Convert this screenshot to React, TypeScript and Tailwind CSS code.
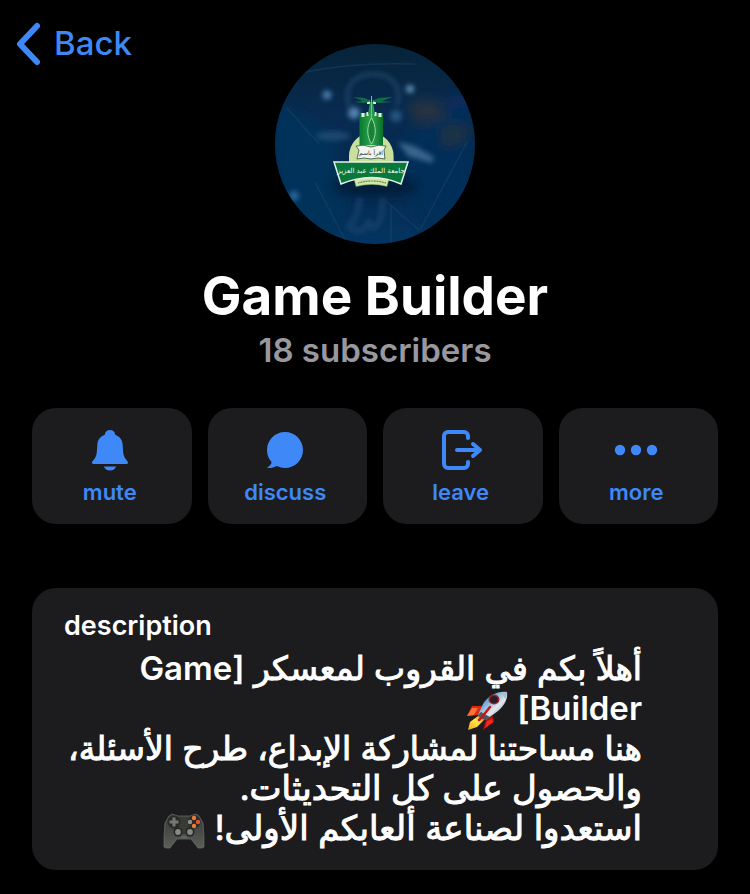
import type { ReactNode } from "react"

interface Action {
  label: string
  icon: ReactNode
}

function BellIcon() {
  return (
    <svg viewBox="0 0 44 44" className="size-11" fill="currentColor" aria-hidden="true">
      <path d="M22 2c-2.900 0-5 2-5.200 4.700C12 8.600 9.500 12 9.300 17L9 22c-.2 4.500-1 7.300-3.600 10.200-.9 1-1.400 1.700-1.400 2.300C4 35.500 4.800 36 6 36h32c1.200 0 2-.5 2-1.500 0-.6-.5-1.300-1.400-2.300C36 29.300 35.200 26.500 35 22l-.3-5c-.2-5-2.700-8.400-7.500-10.300C27 4 24.900 2 22 2Z" />
      <path d="M16 38.500h12c-.7 2.500-3 4-6 4s-5.300-1.500-6-4Z" />
    </svg>
  )
}

function ChatIcon() {
  return (
    <svg viewBox="0 0 44 44" className="size-11" fill="currentColor" aria-hidden="true">
      <path d="M22 4C12 4 4 12 4 22c0 5 1.700 8.800 4.600 12-.4 2.400-1.900 4.200-4 5.200-.5.300-.3.800.3.800 3.500.100 6.500-.6 9-2 2.500 1.300 5.200 2 8.100 2 10 0 18-8 18-18S32 4 22 4Z" />
    </svg>
  )
}

function LeaveIcon() {
  return (
    <svg
      viewBox="0 0 44 44"
      className="size-11"
      fill="none"
      stroke="currentColor"
      strokeWidth="4"
      strokeLinecap="round"
      strokeLinejoin="round"
      aria-hidden="true"
    >
      <path d="M29 10V8a4 4 0 0 0-4-4H9a4 4 0 0 0-4 4v28a4 4 0 0 0 4 4h16a4 4 0 0 0 4-4v-2" />
      <path d="M18 22h23M34 16l7 6-7 6" />
    </svg>
  )
}

function MoreIcon() {
  return (
    <svg viewBox="0 0 44 44" className="size-11" fill="currentColor" aria-hidden="true">
      <circle cx="6" cy="22" r="5.200" />
      <circle cx="22" cy="22" r="5.200" />
      <circle cx="38" cy="22" r="5.200" />
    </svg>
  )
}

const actions: Action[] = [
  { label: "mute", icon: <BellIcon /> },
  { label: "discuss", icon: <ChatIcon /> },
  { label: "leave", icon: <LeaveIcon /> },
  { label: "more", icon: <MoreIcon /> },
]

function Avatar() {
  return (
    <svg viewBox="0 0 200 200" className="size-[200px] rounded-full" role="img" aria-label="Game Builder">
      <defs>
        <linearGradient id="sky" x1="0" y1="0" x2="0" y2="1">
          <stop offset="0" stopColor="#062338" />
          <stop offset="0.35" stopColor="#082b50" />
          <stop offset="0.7" stopColor="#052a50" />
          <stop offset="1" stopColor="#033561" />
        </linearGradient>
        <linearGradient id="tower" x1="0" y1="0" x2="1" y2="0">
          <stop offset="0" stopColor="#087a30" />
          <stop offset="0.5" stopColor="#2fa64d" />
          <stop offset="1" stopColor="#07702a" />
        </linearGradient>
        <filter id="soft" x="-50%" y="-50%" width="200%" height="200%">
          <feGaussianBlur stdDeviation="2.500" />
        </filter>
        <filter id="softer" x="-50%" y="-50%" width="200%" height="200%">
          <feGaussianBlur stdDeviation="6" />
        </filter>
      </defs>
      <rect width="200" height="200" fill="url(#sky)" />

      {/* blurred background */}
      <g filter="url(#softer)">
        <path d="M0 60 60 90 70 190 0 180Z" fill="#06315a" />
        <path d="M120 100 190 60 200 150 150 190Z" fill="#052e58" />
        <ellipse cx="100" cy="142" rx="45" ry="10" fill="#031a38" />
        <path d="M132 62q16-12 32-4l8 16-30 6Z" fill="#253241" />
        <ellipse cx="182" cy="58" rx="13" ry="7" fill="#082c60" />
        <path d="m166 84 14-4 16 3-6 14-22 8Z" fill="#1c3142" />
      </g>
      <g filter="url(#soft)">
        <path d="M74 62c-6-20 6-32 24-32s30 12 24 32" fill="none" stroke="#1b4065" strokeWidth="4" />
        <circle cx="52" cy="51" r="4.500" fill="#4c7baa" />
        <circle cx="135" cy="45" r="4" fill="#5f8cb2" />
        <circle cx="79" cy="69" r="6" fill="#5182ae" />
        <circle cx="121" cy="72" r="6" fill="#27527f" />
        <circle cx="19" cy="152" r="5" fill="#29639a" />
        <ellipse cx="58" cy="92" rx="17" ry="5" fill="#1d466f" />
        <path d="m123 98 16 4 20 11-2 6-24-7Z" fill="#3a658c" />
        <path d="M85 154q-3 22-11 28 10 12 20-4 4 14 12-4l2-20" fill="none" stroke="#143f69" strokeWidth="5" />
      </g>
      <g stroke="#284b68" strokeWidth="1.500" opacity="0.4" fill="none">
        <path d="m12 64 32 36M40 138l30 58M192 98l-47 88M112 158l32 28M116 162v38M30 28q50-10 110-8" />
      </g>

      {/* university crest */}
      <path d="M74 118v-6a22.300 23 0 0 1 44.600 0v6Z" fill="#c9df9b" />
      <rect x="84.500" y="69" width="23.500" height="32" fill="url(#tower)" />
      <g fill="#dff2de">
        <path d="M86.500 69h3v4h-3zM91.500 68h2v4h-2zM99.500 68h2v4h-2zM103.500 69h3v4h-3z" />
        <rect x="92" y="56" width="3" height="4" />
        <rect x="98" y="56" width="3" height="4" />
      </g>
      <g fill="#116b45">
        <path d="m96.500 57-7-3-11-1 9 4-9 1 11 1Z" />
        <path d="m96.500 57 7-3 14-1-10 4 10 1-14 1Z" />
        <path d="M95 58h3l2 12h-7Z" fill="#2b9350" />
      </g>
      <path d="M96.500 52v23" stroke="#78bf83" strokeWidth="1" />
      <path d="M96.500 74c-5 8-5 18 0 26 5-8 5-18 0-26Z" fill="#168339" stroke="#9fd8a0" strokeWidth="1" />
      <path d="M81 102q8-2 15 1 8-3 15-1l-2 4 1 9q-7-2-14 0-7-2-14 0l2-9Z" fill="#f2f5ef" stroke="#536b57" strokeWidth="1" />
      <text x="96" y="111" textAnchor="middle" fontSize="6" fill="#273c2b" fontFamily="'DejaVu Sans', sans-serif">
        اقرأ باسم
      </text>
      <path d="M79 135q18-5 35 0l-2 7.500q-15-4-31 0Z" fill="#d2e6a6" stroke="#6d985e" strokeWidth="0.500" />
      <path d="M83 139q14-4 28 0" stroke="#537743" strokeWidth="1.200" strokeDasharray="1 0.600" fill="none" />
      <path d="M59 118h74l-7 22q-29-13-60 0Z" fill="#08783b" stroke="#e5f4e8" strokeWidth="1.500" />
      <text x="96" y="129" textAnchor="middle" fontSize="7" fill="#f2fff5" fontFamily="'DejaVu Sans', sans-serif">
        جامعة الملك عبد العزيز
      </text>
    </svg>
  )
}

function Rocket() {
  return (
    <svg viewBox="0 0 42 40" className="-my-2 inline-block h-10 w-[42px] align-middle" role="img" aria-label="rocket">
      <defs>
        <linearGradient id="hull" x1="0" y1="0" x2="1" y2="1">
          <stop offset="0" stopColor="#3e82bd" />
          <stop offset="0.350" stopColor="#79afd8" />
          <stop offset="0.600" stopColor="#e3e8ee" />
          <stop offset="1" stopColor="#677481" />
        </linearGradient>
        <linearGradient id="flame" x1="1" y1="0" x2="0" y2="1">
          <stop offset="0" stopColor="#f07a13" />
          <stop offset="0.450" stopColor="#ffe64c" />
          <stop offset="1" stopColor="#f4a914" />
        </linearGradient>
      </defs>
      <path d="m16 15-10 0-5 10 12-1Z" fill="#d92914" />
      <path d="m12 17-6 0-5 8 7-1Z" fill="#ff7038" />
      <path d="m27 25 1 6-11 8 3-11Z" fill="#b80e12" />
      <path d="m26 28 1 3-8 6 2-7Z" fill="#f02a1f" />
      <path d="m12 25-8 6-2 8 9-3 8-8Z" fill="url(#flame)" />
      <path d="M41 1C31 0 22 5 17 13l-5 11 3 3 6 1 11-8C39 14 42 7 41 1Z" fill="url(#hull)" />
      <path d="m12 24 3 4 6 1 3-3-9-5Z" fill="#55555d" />
      <path d="m24 16-8 10-3 3" stroke="#c71818" strokeWidth="2.500" strokeLinecap="round" />
      <ellipse cx="28" cy="8.500" rx="5.500" ry="5" fill="#a51d24" />
      <ellipse cx="28" cy="8.500" rx="3.900" ry="3.500" fill="#24202a" />
      <path d="M35 2q4-1 6-1 0 4-2 7-1-4-4-6Z" fill="#a9bdca" />
    </svg>
  )
}

function Gamepad() {
  return (
    <svg viewBox="0 0 42 36" className="-my-2 inline-block h-9 w-[42px] align-middle" role="img" aria-label="game controller">
      <defs>
        <linearGradient id="pad" x1="0" y1="0" x2="0" y2="1">
          <stop offset="0" stopColor="#3b3c3a" />
          <stop offset="0.500" stopColor="#484a47" />
          <stop offset="1" stopColor="#5c5e5a" />
        </linearGradient>
      </defs>
      <path d="m6 3 3-2 6 2h12l6-2 3 2 4 7 1 14v10l-2 1h-4l-7-9H14l-7 9H3l-2-1V24l1-14Z" fill="url(#pad)" stroke="#6d6f6a" strokeWidth="0.700" />
      <path d="M12 4h18l4 7-4 10H12L8 11Z" fill="#393b39" />
      <circle cx="11" cy="9" r="6.500" fill="#292b28" />
      <path d="M9.500 4.500h3v3h3v3h-3v3h-3v-3h-3v-3h3Z" fill="#767972" />
      <circle cx="31" cy="9" r="6.500" fill="#292b28" />
      <circle cx="31" cy="5" r="2.200" fill="#f07a39" />
      <circle cx="35" cy="9" r="2.200" fill="#e75528" />
      <circle cx="31" cy="13" r="2.200" fill="#f07a39" />
      <circle cx="27" cy="9" r="2.200" fill="#92918a" />
      <circle cx="15" cy="19" r="4.500" fill="#242622" />
      <circle cx="27" cy="19" r="4.500" fill="#242622" />
      <circle cx="15" cy="19" r="2.900" fill="#858a84" />
      <circle cx="27" cy="19" r="2.900" fill="#858a84" />
      <path d="M18 24h6" stroke="#777a73" />
    </svg>
  )
}

export default function App() {
  return (
    <main className="min-h-screen bg-black px-8 pb-6 font-['Inter','DejaVu_Sans',sans-serif] text-white">
      <header className="grid grid-cols-[1fr_auto_1fr] items-start">
        <a href="#back" className="-ml-4 mt-5 flex h-12 items-center gap-3 text-[33px] font-medium text-[#3e88f7]">
          <svg viewBox="0 0 26 44" className="h-11 w-[26px]" fill="none" stroke="currentColor" strokeWidth="6" strokeLinecap="round" strokeLinejoin="round" aria-hidden="true">
            <path d="M21 4 4 22l17 18" />
          </svg>
          Back
        </a>
        <div className="pt-11">
          <Avatar />
        </div>
      </header>

      <h1 className="mt-5 text-center text-[53px] leading-16 font-bold">Game Builder</h1>
      <p className="mt-0.5 text-center text-[33px] leading-10 font-semibold text-[#98989e]">18 subscribers</p>

      <div className="mt-[38px] grid grid-cols-4 gap-4">
        {actions.map((action) => (
          <button
            key={action.label}
            type="button"
            className="flex h-[116px] flex-col items-center rounded-3xl bg-[#1c1c1e] pt-5 pr-1 text-[#3e88f7]"
          >
            {action.icon}
            <span className="mt-1 text-[22px] leading-8 font-semibold">{action.label}</span>
          </button>
        ))}
      </div>

      <section className="mt-16 rounded-3xl bg-[#1c1c1e] px-8 pt-5 pb-[22px]">
        <h2 className="mb-1 text-[27px] leading-9 font-semibold">description</h2>
        <div dir="rtl" className="pr-11 text-[33px] leading-10 whitespace-nowrap [-webkit-text-stroke:1px_white]">
          <p>
            أهلاً بكم في القروب لمعسكر{" "}
            <span className="font-semibold [-webkit-text-stroke:0]">
              [Game
              <br />
              Builder]
            </span>{" "}
            <Rocket />
          </p>
          <p>هنا مساحتنا لمشاركة الإبداع، طرح الأسئلة،</p>
          <div className="text-[34px]">
            <p>والحصول على كل التحديثات.</p>
            <p>
              استعدوا لصناعة ألعابكم الأولى! <Gamepad />
            </p>
          </div>
        </div>
      </section>
    </main>
  )
}
